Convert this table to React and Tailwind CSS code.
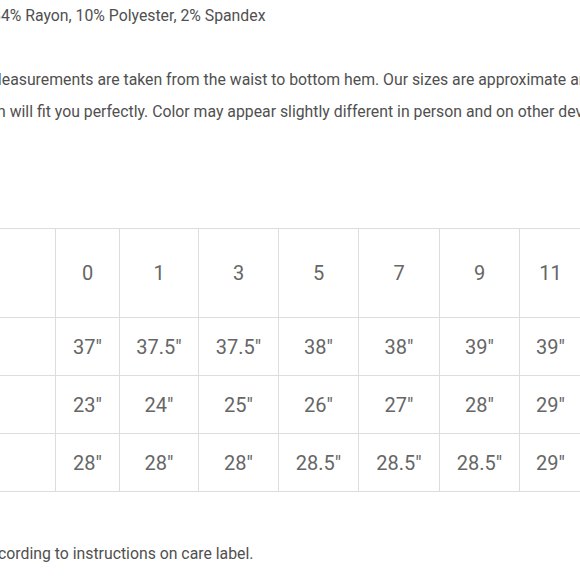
import React from 'react';

const sizes = ['0', '1', '3', '5', '7', '9', '11'];

const rows = [
  ['37"', '37.5"', '37.5"', '38"', '38"', '39"', '39"'],
  ['23"', '24"', '25"', '26"', '27"', '28"', '29"'],
  ['28"', '28"', '28"', '28.5"', '28.5"', '28.5"', '29"'],
];

// column widths, first one runs off the left edge
const colW = ['w-[64px]', 'w-[79px]', 'w-[80px]', 'w-[80px]', 'w-[81px]', 'w-[80px]', 'w-[62px]'];

const App = () => {
  return (
    <div
      className="w-[580px] h-[580px] overflow-hidden bg-white text-[#505050] text-[15.8px] leading-[32px]"
      style={{ fontFamily: 'Roboto, "Liberation Sans", sans-serif' }}
    >
      <p className="whitespace-nowrap ml-[-8px]">84% Rayon, 10% Polyester, 2% Spandex</p>
      <div className="h-[32px]" />
      <p className="whitespace-nowrap ml-[-12px]">
        Measurements are taken from the waist to bottom hem. Our sizes are approximate and we cannot
      </p>
      <p className="whitespace-nowrap ml-[-3px]">
        n will fit you perfectly. Color may appear slightly different in person and on other devices.
      </p>

      <div className="mt-[100px] ml-[-100px]">
        <table className="table-fixed w-[700px] border-collapse text-[20px] text-[#666] leading-none">
          <colgroup>
            <col className="w-[155px]" />
            {colW.map((w, i) => (
              <col key={i} className={w} />
            ))}
            <col className="w-[99px]" />
          </colgroup>
          <tbody>
            <tr className="h-[89px]">
              <td className="border border-[#ddd]" />
              {sizes.map((s) => (
                <td key={s} className="border border-[#ddd] text-center">
                  {s}
                </td>
              ))}
              <td className="border border-[#ddd]" />
            </tr>
            {rows.map((r, ri) => (
              <tr key={ri} className="h-[58px]">
                <td className="border border-[#ddd]" />
                {r.map((v, i) => (
                  <td key={i} className="border border-[#ddd] text-center">
                    {v}
                  </td>
                ))}
                <td className="border border-[#ddd]" />
              </tr>
            ))}
          </tbody>
        </table>
      </div>

      <p className="whitespace-nowrap ml-[-2px] mt-[46px]">cording to instructions on care label.</p>
    </div>
  );
};

export default App;
